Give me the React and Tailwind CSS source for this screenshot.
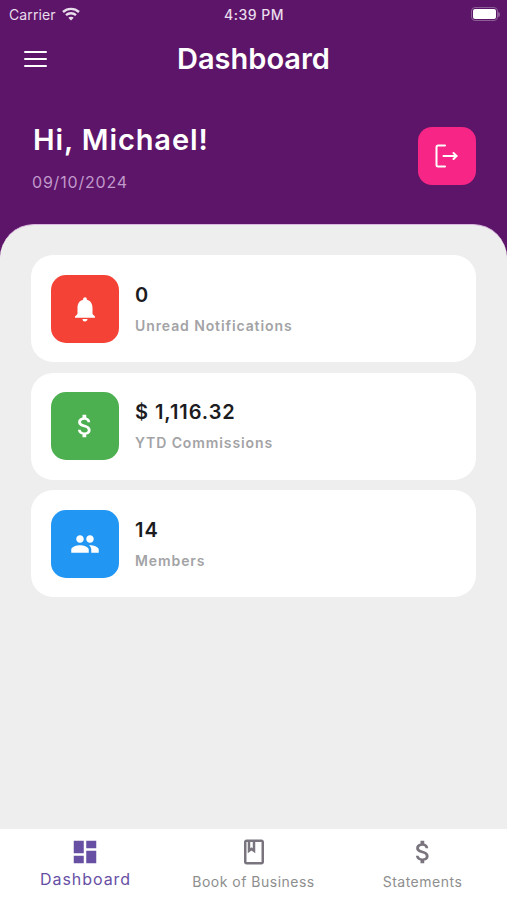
import { MdNotifications, MdAttachMoney, MdPeople, MdDashboard, MdOutlineBook } from 'react-icons/md';

const stats = [
  { value: '0', label: 'Unread Notifications', color: 'bg-[#f44336]', Icon: MdNotifications },
  { value: '$ 1,116.32', label: 'YTD Commissions', color: 'bg-[#4caf50]', Icon: MdAttachMoney },
  { value: '14', label: 'Members', color: 'bg-[#2196f3]', Icon: MdPeople },
];

const StatusBar = () => (
  <div className="relative flex h-[28px] items-center justify-between pl-[9px] pr-[7px] text-[14px] tracking-[0.1px] text-[#e9dcec]">
    <div className="flex items-center gap-[6px]">
      <span>Carrier</span>
      <svg width="18" height="14" viewBox="0 0 18 14" fill="none" stroke="currentColor" strokeWidth="2.4">
        <path d="M1 5c4.500-4.200 11.500-4.200 16 0" />
        <path d="M4 8.200c2.800-2.600 7.200-2.600 10 0" />
        <path d="M9 13.500 6.300 10.800c1.500-1.300 3.900-1.300 5.400 0z" fill="currentColor" stroke="none" />
      </svg>
    </div>
    <span className="absolute left-[224px] top-[4px] text-[14px] font-medium tracking-[0.5px]">4:39 PM</span>
    <div className="flex items-center">
      <div className="flex h-[14px] w-[27px] items-center rounded-[4px] border border-[#8b5f95] p-[1px]">
        <div className="h-full w-full rounded-[2px] bg-white" />
      </div>
      <div className="h-[5px] w-[2px] rounded-r-sm bg-[#8b5f95]" />
    </div>
  </div>
);

const StatCard = ({ value, label, color, Icon }) => (
  <div className="flex h-[107px] items-center gap-[16px] rounded-[22px] bg-white px-[20px]">
    <div className={`flex h-[68px] w-[68px] items-center justify-center rounded-[15px] text-white ${color}`}>
      <Icon size={30} />
    </div>
    <div>
      <div className="text-[20px] font-semibold leading-[26px] tracking-[0.95px] text-[#1c1c1e]">{value}</div>
      <div className="mt-[8px] text-[14px] font-semibold leading-[20px] tracking-[0.9px] text-[#a3a3a6]">{label}</div>
    </div>
  </div>
);

const TabItem = ({ label, active, children }) => (
  <div className={`flex flex-1 flex-col items-center ${active ? 'text-[#6750a4]' : 'text-[#79747e]'}`}>
    <div className="flex h-[36px] items-center justify-center">{children}</div>
    <span
      className={
        active
          ? '-mt-[2px] pl-[2px] text-[16px] leading-[22px] tracking-[0.95px]'
          : 'mt-[2px] text-[14px] leading-[20px] tracking-[0.5px] text-[#8e8e8e]'
      }
    >
      {label}
    </span>
  </div>
);

export default function App() {
  return (
    <div className="flex h-[900px] w-[507px] flex-col overflow-hidden bg-[#5c1568] font-['Inter',sans-serif]">
      <StatusBar />
      <div className="relative flex h-[62px] items-center justify-center">
        <svg className="absolute left-[24px] top-[23px]" width="23" height="16" viewBox="0 0 23 16" fill="white">
          <rect width="23" height="2" y="0" rx="1" />
          <rect width="23" height="2" y="7" rx="1" />
          <rect width="23" height="2" y="14" rx="1" />
        </svg>
        <h1 className="text-[29px] font-semibold text-white">Dashboard</h1>
      </div>
      <div className="flex h-[134px] items-start justify-between pl-[32px] pr-[31px]">
        <div className="pt-[30px]">
          <div className="pl-[1px] text-[29px] font-semibold leading-[40px] tracking-[0.9px] text-white">Hi, Michael!</div>
          <div className="mt-[10px] text-[16px] leading-[24px] tracking-[0.8px] text-[#c198cb]">09/10/2024</div>
        </div>
        <div className="mt-[37px] flex h-[58px] w-[58px] items-center justify-center rounded-[14px] bg-[#f72585]">
          <svg width="24" height="24" viewBox="0 0 24 24" fill="none" stroke="white" strokeWidth="2" strokeLinecap="round" strokeLinejoin="round">
            <path d="M10 1.500H3a1.500 1.500 0 0 0-1.500 1.500v18a1.500 1.500 0 0 0 1.500 1.500h7" />
            <path d="M8.500 12H21.500" />
            <path d="M18.500 9 21.500 12l-3 3" />
          </svg>
        </div>
      </div>
      <main className="flex flex-1 flex-col gap-[10.500px] rounded-t-[34px] border-t border-[#d9b8de] bg-[#eeeeee] px-[31px] pt-[30px]">
        {stats.map((it) => (
          <StatCard key={it.label} {...it} />
        ))}
      </main>
      <nav className="flex h-[71px] bg-white pt-[5px]">
        <TabItem label="Dashboard" active>
          <MdDashboard size={30} />
        </TabItem>
        <TabItem label="Book of Business">
          <MdOutlineBook size={30} />
        </TabItem>
        <TabItem label="Statements">
          <MdAttachMoney size={30} />
        </TabItem>
      </nav>
    </div>
  );
}
